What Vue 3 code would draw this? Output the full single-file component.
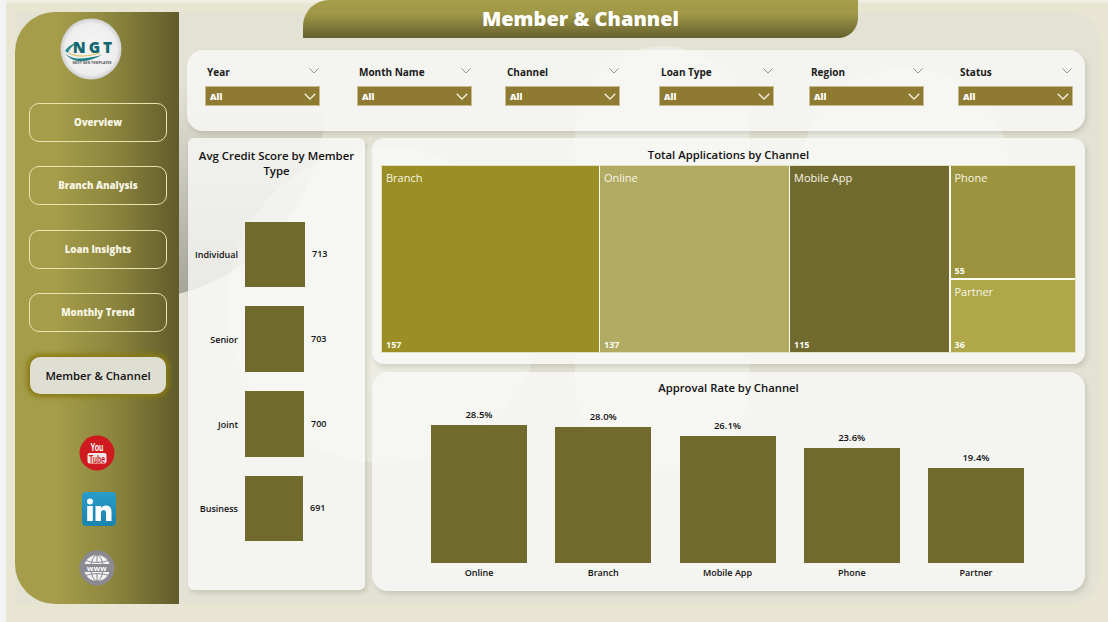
<script setup>
const navItems = [
  { label: 'Overview', gap: 0 },
  { label: 'Branch Analysis', gap: 24 },
  { label: 'Loan Insights', gap: 25 },
  { label: 'Monthly Trend', gap: 24 },
]
const filters = ['Year', 'Month Name', 'Channel', 'Loan Type', 'Region', 'Status']
const members = [
  { name: 'Individual', value: 713, width: 60, height: 65, gap: 0 },
  { name: 'Senior', value: 703, width: 59, height: 66, gap: 19 },
  { name: 'Joint', value: 700, width: 59, height: 66, gap: 19 },
  { name: 'Business', value: 691, width: 58, height: 65, gap: 19 },
]
const rates = [
  { name: 'Online', value: '28.5%', height: 138 },
  { name: 'Branch', value: '28.0%', height: 136 },
  { name: 'Mobile App', value: '26.1%', height: 127 },
  { name: 'Phone', value: '23.6%', height: 115 },
  { name: 'Partner', value: '19.4%', height: 95 },
]
</script>

<template>
  <div class="page">
    <div class="frame">
      <aside class="sidebar">
        <svg class="logo" width="62" height="62" viewBox="0 0 62 62">
          <defs>
            <radialGradient id="logoBg" cx="50%" cy="50%" r="50%">
              <stop offset="0%" stop-color="#f6f6f6" />
              <stop offset="84%" stop-color="#eeeeee" />
              <stop offset="100%" stop-color="#cfcfcf" />
            </radialGradient>
          </defs>
          <circle cx="31" cy="31" r="30.5" fill="url(#logoBg)" />
          <path d="M5 33 C8 28 13 25 18 25 C13 27 10 30 8 35 Z" fill="#2d8b8f" />
          <path d="M5 35 C12 43 24 41 42 37 C28 45 12 46 5 35 Z" fill="#1f7f86" />
          <path d="M9 35 C18 40 28 38 40 35" fill="none" stroke="#d9b84a" stroke-width="1" />
          <text x="34" y="35" text-anchor="middle" class="logo-main">NGT</text>
          <text x="32" y="46" text-anchor="middle" class="logo-sub">NEXT GEN TEMPLATES</text>
        </svg>

        <nav class="nav">
          <a v-for="item in navItems" :key="item.label" class="nav-btn" :style="{ marginTop: item.gap + 'px' }">{{ item.label }}</a>
          <a class="nav-btn active">Member &amp; Channel</a>
        </nav>

        <div class="socials">
          <svg width="36" height="36" viewBox="0 0 36 36">
            <circle cx="18" cy="18" r="17.5" fill="#cf1a20" />
            <text x="18" y="16" text-anchor="middle" class="yt-you" textLength="13" lengthAdjust="spacingAndGlyphs">You</text>
            <rect x="8.500" y="18" width="19" height="10.500" rx="2" fill="#f4e6e6" />
            <text x="18" y="27.500" text-anchor="middle" class="yt-tube" textLength="16" lengthAdjust="spacingAndGlyphs">Tube</text>
          </svg>
          <svg class="linkedin" width="34" height="34" viewBox="0 0 34 34">
            <defs>
              <linearGradient id="inBg" x1="0" y1="0" x2="0" y2="1">
                <stop offset="0%" stop-color="#2a9cc9" />
                <stop offset="100%" stop-color="#1a83ad" />
              </linearGradient>
            </defs>
            <rect width="34" height="34" rx="4" fill="url(#inBg)" />
            <circle cx="8" cy="9.500" r="3" fill="#fff" />
            <rect x="5.200" y="14" width="5.600" height="15" fill="#fff" />
            <path d="M13.500 14 H19 V16.200 C20 14.600 21.800 13.600 24 13.600 C28 13.600 29.500 16.200 29.500 20 V29 H24 V21 C24 19 23.300 18 21.600 18 C20 18 19 19.200 19 21 V29 H13.500 Z" fill="#fff" />
          </svg>
          <svg class="globe" width="36" height="36" viewBox="0 0 36 36">
            <circle cx="18" cy="18" r="17.500" fill="#8a8a90" />
            <circle cx="18" cy="18" r="13" fill="#f2f2f2" />
            <g fill="none" stroke="#8a8a90" stroke-width="1">
              <ellipse cx="18" cy="18" rx="6" ry="13" />
              <path d="M18 5 V12 M18 24 V31 M7 10.500 C12 13 24 13 29 10.500 M7 25.500 C12 23 24 23 29 25.500" />
            </g>
            <rect x="4" y="14" width="28" height="8" fill="#8a8a90" />
            <text x="18" y="21" text-anchor="middle" class="www">www</text>
          </svg>
        </div>
      </aside>

      <main class="content">
        <div class="decor-layer">
          <div class="decor shade"></div>
          <div class="decor circle c1"></div>
          <div class="decor circle c2"></div>
          <div class="decor circle c3"></div>
        </div>

        <header class="title">Member &amp; Channel</header>

        <section class="card filters">
          <div v-for="f in filters" :key="f" class="filter">
            <div class="filter-head">
              <span>{{ f }}</span>
              <svg width="10" height="6" viewBox="0 0 10 6"><path d="M.5.5 5 5 9.500.5" fill="none" stroke="#777" stroke-width=".8" /></svg>
            </div>
            <div class="select">
              <span>All</span>
              <svg width="12" height="7" viewBox="0 0 12 7"><path d="M.7.7 6 6 11.300.7" fill="none" stroke="#f2efdc" stroke-width="1.300" /></svg>
            </div>
          </div>
        </section>

        <div class="lower">
          <section class="card members">
            <h2 class="members-title">Avg Credit Score by Member Type</h2>
            <div class="member-rows">
              <div v-for="m in members" :key="m.name" class="member-row" :style="{ marginTop: m.gap + 'px' }">
                <span class="member-name">{{ m.name }}</span>
                <span class="member-bar" :style="{ width: m.width + 'px', height: m.height + 'px' }"></span>
                <span class="member-value">{{ m.value }}</span>
              </div>
            </div>
          </section>

          <div class="right">
            <section class="card treemap-card">
              <h2 class="chart-title">Total Applications by Channel</h2>
              <div class="treemap">
                <div class="tile branch"><span class="tile-name">Branch</span><b>157</b></div>
                <div class="tile online"><span class="tile-name">Online</span><b>137</b></div>
                <div class="tile mobile"><span class="tile-name">Mobile App</span><b>115</b></div>
                <div class="tile-stack">
                  <div class="tile phone"><span class="tile-name">Phone</span><b>55</b></div>
                  <div class="tile partner"><span class="tile-name">Partner</span><b>36</b></div>
                </div>
              </div>
            </section>

            <section class="card approval">
              <h2 class="chart-title">Approval Rate by Channel</h2>
              <div class="bars">
                <div v-for="r in rates" :key="r.name" class="bar-col">
                  <span class="bar-value">{{ r.value }}</span>
                  <span class="bar" :style="{ height: r.height + 'px' }"></span>
                  <span class="bar-name">{{ r.name }}</span>
                </div>
              </div>
            </section>
          </div>
        </div>
      </main>
    </div>
  </div>
</template>

<style>
html, body { margin: 0; background: #f3f3f1; }
</style>

<style scoped>
* { box-sizing: border-box; }
.page {
  width: 1108px;
  height: 622px;
  overflow: hidden;
  padding: 12px 8px 18px 9px;
  font-family: "Open Sans", "Noto Sans", sans-serif;
  color: #111;
  background: linear-gradient(#f2f1e8 0, #e8e6d3 4px);
  border-left: 6px solid #f3f3f3;
  position: relative;
}
.frame {
  display: flex;
  height: 592px;
  background: #e4e2d4;
  border-radius: 0 30px 30px 0;
}
.sidebar {
  width: 164px;
  flex: none;
  position: relative;
  z-index: 2;
  display: flex;
  flex-direction: column;
  background: linear-gradient(90deg, #a59d49 0%, #a59d49 25%, #8c853e 60%, #605b2b 100%);
  border-radius: 40px 0 0 40px;
}
.logo { margin: 6px 0 0 45px; display: block; }
.logo-main { font: 800 15.500px "Open Sans", sans-serif; fill: #14666f; letter-spacing: 3px; }
.logo-sub { font: 700 3.600px "Open Sans", sans-serif; fill: #555; }
.nav { margin: 23px 0 0 14px; display: flex; flex-direction: column; }
.nav-btn {
  display: flex;
  align-items: center;
  justify-content: center;
  width: 138px;
  height: 39px;
  border: 1px solid #e9e3b0;
  border-radius: 10px;
  color: #f7f5e4;
  font-size: 9.700px;
  font-weight: 800;
}
.nav-btn.active {
  width: 136px;
  height: 37px;
  margin: 25px 0 0 1px;
  border: 0;
  background: #dfded3;
  color: #111;
  font-size: 11.300px;
  font-weight: 600;
  box-shadow: 0 0 5px 3px #8a7a14;
}
.socials {
  margin-top: 41px;
  margin-left: 64px;
  display: flex;
  flex-direction: column;
  gap: 21px;
}
.linkedin { margin-left: 3px; }
.globe { margin-top: 3px; }
.socials svg { display: block; }
.yt-you { font: 700 11px "Liberation Sans", sans-serif; fill: #fff; }
.yt-tube { font: 700 10.500px "Liberation Sans", sans-serif; fill: #cf1a20; }
.www { font: 700 8px "Liberation Sans", sans-serif; fill: #fff; letter-spacing: .5px; }

.content {
  flex: 1;
  position: relative;
  padding: 38px 0 0 8px;
  min-width: 0;
}
.decor-layer {
  position: absolute;
  inset: 0;
  overflow: hidden;
  border-radius: 0 30px 30px 0;
}
.decor { position: absolute; }
.shade {
  left: -244px;
  top: -102px;
  width: 390px;
  height: 390px;
  border-radius: 50%;
  background: linear-gradient(rgba(120, 120, 105, 0) 45%, rgba(100, 100, 90, .5) 100%);
}
.circle { background: rgba(255, 255, 255, .35); }
.c1 { left: 48px; top: 135px; width: 316px; height: 316px; border-radius: 50%; }
.c2 { left: 396px; top: 34px; width: 175px; height: 426px; border-radius: 88px; }
.c3 { left: 621px; top: 56px; width: 210px; height: 210px; border-radius: 50%; }

.title {
  position: absolute;
  z-index: 3;
  left: 124px;
  top: -12px;
  width: 555px;
  height: 38px;
  display: flex;
  align-items: center;
  justify-content: center;
  padding-bottom: 1px;
  color: #fff;
  font-size: 20px;
  font-weight: 800;
  background: linear-gradient(#a59d49 0%, #a09846 35%, #65602f 100%);
  border-radius: 26px 0 20px 0;
}

.card {
  position: relative;
  z-index: 1;
  background: rgba(248, 248, 247, .82);
  box-shadow: 2px 3px 5px rgba(90, 90, 70, .2);
}
.filters {
  height: 81px;
  border-radius: 16px;
  width: 898px;
  padding: 15px 0 0 18px;
  display: grid;
  grid-template-columns: 152px 148px 154px 150px 149px 115px;
  align-items: start;
}
.filter { width: 115px; }
.filter-head {
  display: flex;
  justify-content: space-between;
  align-items: center;
  height: 14px;
  padding: 0 1px 0 2px;
  font-size: 10px;
  font-weight: 700;
  color: #1a1a1a;
}
.filter-head svg { margin-top: -2px; }
.select {
  margin-top: 7px;
  height: 20px;
  background: #8e7b31;
  border: 1px solid #c5bd90;
  display: flex;
  align-items: center;
  justify-content: space-between;
  padding: 0 3px 0 4px;
  color: #fff;
  font-size: 9px;
  font-weight: 800;
}

.lower { display: flex; margin-top: 7px; gap: 7px; margin-left: 1px; }
.members {
  width: 177px;
  height: 452px;
  border-radius: 6px;
  padding-top: 10px;
}
.members-title {
  margin: 0;
  text-align: center;
  font-size: 11.400px;
  line-height: 15px;
  font-weight: 600;
  color: #111;
}
.member-rows { margin-top: 44px; }
.member-row { display: flex; align-items: center; }
.member-name {
  width: 57px;
  flex: none;
  padding-right: 7px;
  text-align: right;
  font-size: 9px;
  font-weight: 600;
}
.member-bar { background: #716a2f; display: block; flex: none; }
.member-value { margin-left: 7px; font-size: 9px; font-weight: 600; margin-top: -2px; }

.right { width: 713px; display: flex; flex-direction: column; gap: 8px; }
.treemap-card {
  height: 226px;
  border-radius: 12px;
  padding: 9px 9px 0;
}
.chart-title {
  margin: 0;
  text-align: center;
  font-size: 11.300px;
  line-height: 16px;
  font-weight: 600;
  color: #111;
}
.treemap {
  margin-top: 2px;
  height: 188px;
  display: grid;
  grid-template-columns: 216.500px 188.500px 159px 1fr;
  gap: 1.500px;
  border: 1px solid #e4e0bd;
  background: #fbfbf4;
}
.tile {
  position: relative;
  color: #f8f6e6;
  font-size: 11px;
  padding: 4px;
}
.tile-name { display: block; line-height: 16px; }
.tile b {
  position: absolute;
  left: 4px;
  bottom: 1px;
  font-size: 9px;
  line-height: 12px;
  font-weight: 700;
  color: #fbfbf0;
}
.tile-stack { display: grid; grid-template-rows: 112px 1fr; gap: 2px; }
.branch { background: #9b8e25; }
.online { background: #b0aa63; }
.mobile { background: #716a2f; }
.phone { background: #9b933e; }
.partner { background: #afa74a; }

.approval {
  height: 219px;
  border-radius: 16px;
  padding-top: 8px;
}
.bars {
  position: absolute;
  left: 59px;
  right: 61px;
  bottom: 12px;
  height: 180px;
  display: flex;
  justify-content: space-between;
  align-items: flex-end;
}
.bar-col { width: 96px; display: flex; flex-direction: column; align-items: center; }
.bar-value { font-size: 9.500px; font-weight: 600; line-height: 12px; margin-bottom: 4px; }
.bar { display: block; width: 96px; background: #716a2f; }
.bar-name { font-size: 9px; font-weight: 600; line-height: 12px; margin-top: 4px; }
</style>
